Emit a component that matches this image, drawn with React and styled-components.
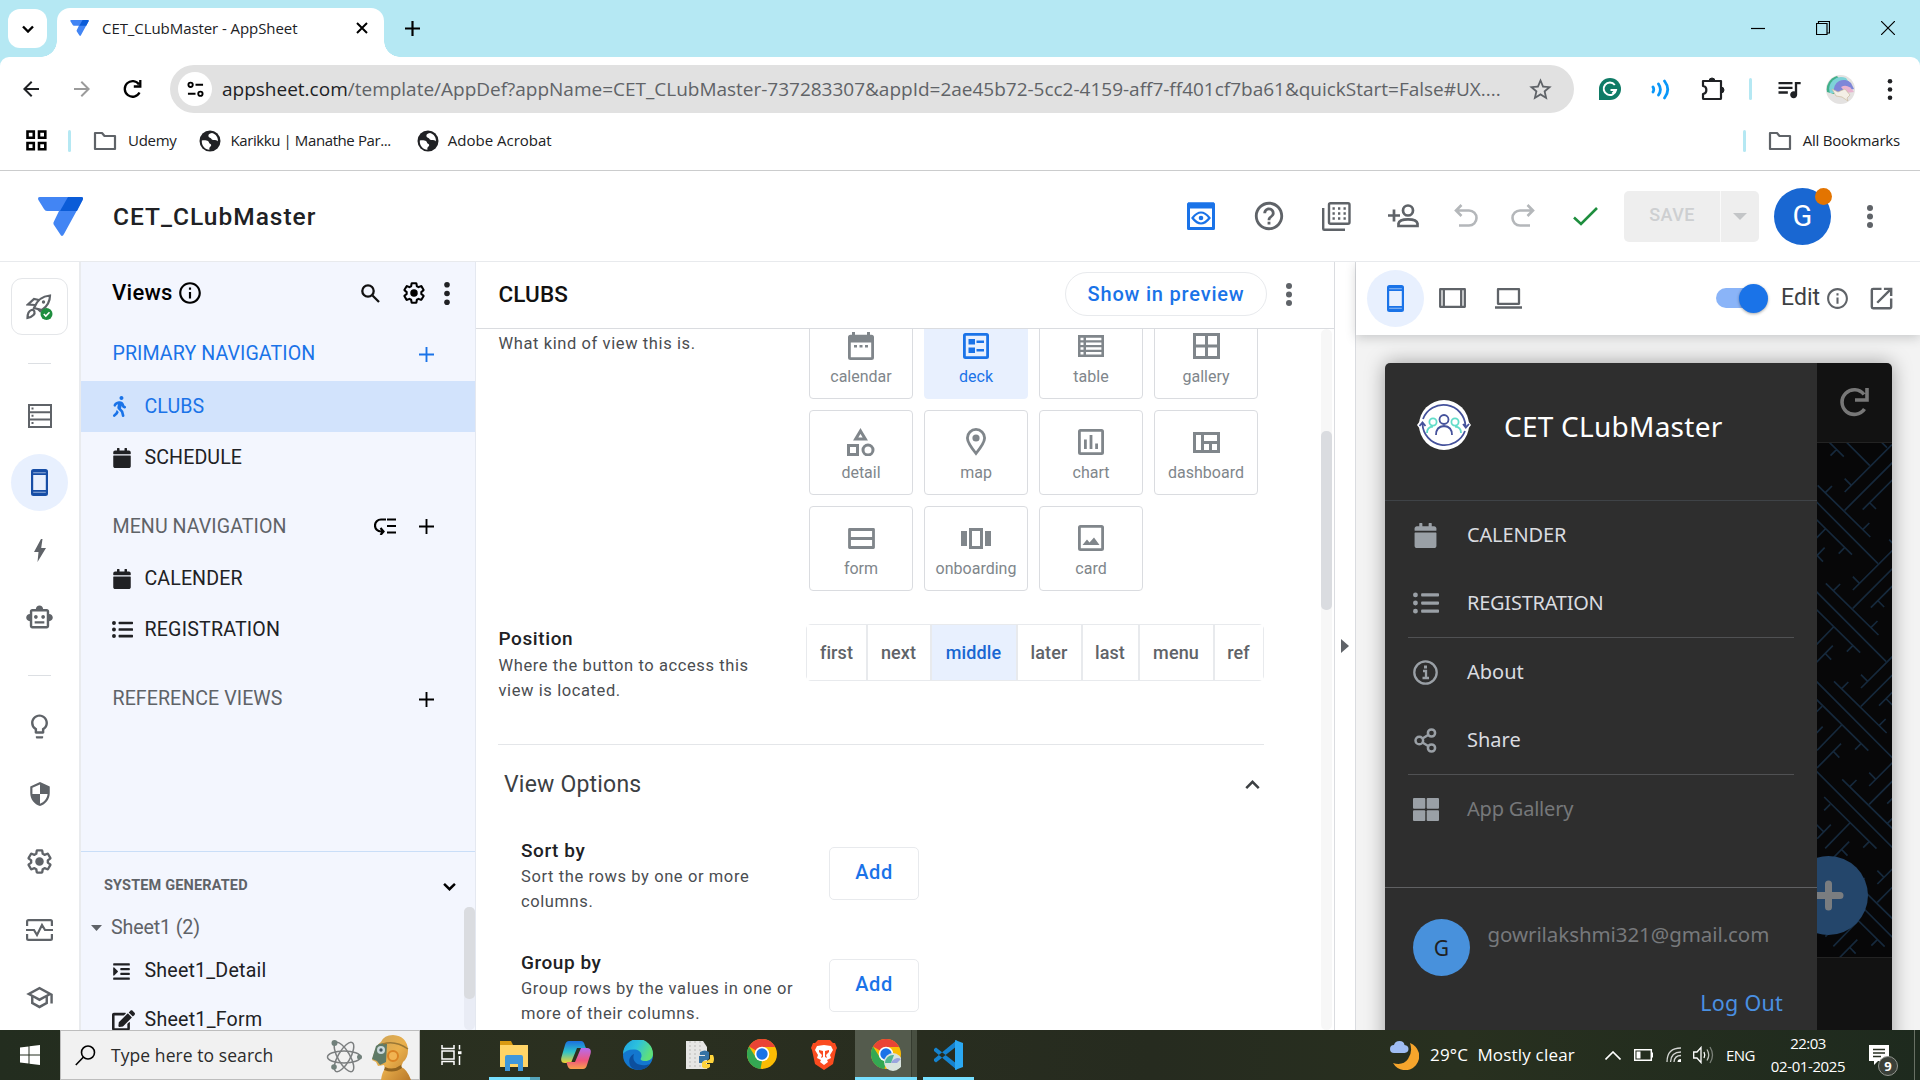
import React from "react";
import styled, { createGlobalStyle, css } from "styled-components";
import {
  MdHelpOutline, MdInfoOutline,
  MdOutlineSmartToy, MdOutlineLightbulb, MdOutlineSchool, MdSecurity,
  MdOpenInNew, MdQueueMusic, MdStarOutline, MdArrowBack, MdArrowForward,
} from "react-icons/md";
import { FaWalking, FaCalendar, FaListUl, FaIndent, FaEdit } from "react-icons/fa";

const SEGOE = '"Open Sans", "Noto Sans", sans-serif';
const ROBOTO = 'Roboto, "Liberation Sans", sans-serif';
const GSANS = 'Roboto, "Open Sans", sans-serif';
const NOTO = '"Noto Sans", "Open Sans", sans-serif';

const Global = createGlobalStyle`
  *, *::before, *::after { box-sizing: border-box; }
  html, body { margin: 0; padding: 0; overflow: hidden; }
  body { width: 1920px; height: 1080px; background: #fff; }
  svg { display: block; flex: none; }
`;

const T = styled.span`
  white-space: pre;
  flex: none;
  font-family: ${(p) => p.$f || ROBOTO};
  font-size: ${(p) => p.$s}px;
  font-weight: ${(p) => p.$b || 400};
  letter-spacing: ${(p) => p.$ls || 0}px;
  line-height: ${(p) => p.$lh || 24}px;
  color: ${(p) => p.$c || "#202124"};
`;

const Screen = styled.div`
  width: 1920px;
  height: 1080px;
  display: flex;
  flex-direction: column;
  overflow: hidden;
`;

/* ---------- browser chrome ---------- */
const TabStrip = styled.div`
  height: 57px;
  background: #b5e8f3;
  display: flex;
  align-items: flex-end;
  padding-left: 8px;
`;
const TabSearch = styled.div`
  width: 39px;
  height: 39px;
  margin: 0 10px 9px 0;
  border-radius: 12px;
  background: #fff;
  display: grid;
  place-items: center;
`;
const Tab = styled.div`
  position: relative;
  width: 327px;
  height: 49px;
  background: #fff;
  border-radius: 13px 13px 0 0;
  display: flex;
  align-items: center;
  padding: 0 16px 9px 13px;
  gap: 13px;
  &::before, &::after {
    content: "";
    position: absolute;
    bottom: 0;
    width: 16px;
    height: 16px;
  }
  &::before { left: -16px; background: radial-gradient(circle at 0 0, transparent 15.5px, #fff 16px); }
  &::after { right: -16px; background: radial-gradient(circle at 100% 0, transparent 15.5px, #fff 16px); }
`;
const Grow = styled.div`flex: 1;`;
const NewTab = styled.div`padding: 0 0 21px 21px;`;
const WindowButtons = styled.div`
  display: flex;
  gap: 51px;
  padding: 0 25px 22px 0;
`;
const ToolbarBack = styled.div`background: #b5e8f3;`;
const Toolbar = styled.div`
  height: 64px;
  background: #fff;
  border-radius: 9px 9px 0 0;
  display: flex;
  align-items: center;
  padding-left: 19px;
`;
const NavIcons = styled.div`
  display: flex;
  width: 151px;
  gap: 27px;
`;
const Omnibox = styled.div`
  width: 1404px;
  height: 48px;
  border-radius: 24px;
  background: #e1e1e1;
  display: flex;
  align-items: center;
  padding: 0 20px 0 8px;
`;
const SiteInfo = styled.div`
  width: 34px;
  height: 34px;
  border-radius: 50%;
  background: #fff;
  margin-right: 10px;
  display: grid;
  place-items: center;
`;
const Extensions = styled.div`
  display: flex;
  align-items: center;
  margin-left: 10px;
`;
const Bar = styled.i`
  width: 3px;
  height: 22px;
  border-radius: 2px;
  background: #b5e8f3;
  margin: ${(p) => p.$m || 0};
`;
const Profile = styled.div`
  width: 29px;
  height: 29px;
  border-radius: 50%;
  overflow: hidden;
`;
const Bookmarks = styled.div`
  height: 50px;
  border-bottom: 1px solid #cbcccd;
  display: flex;
  align-items: center;
  padding: 0 20px 10px 26px;
`;
const Bookmark = styled.div`
  display: flex;
  align-items: center;
  color: #5f6368;
  gap: ${(p) => p.$g || 10}px;
  margin-right: ${(p) => p.$m || 0}px;
  ${T} { padding-bottom: 2px; line-height: 22px; }
`;

/* ---------- app header ---------- */
const AppHeader = styled.header`
  height: 91px;
  background: #fff;
  border-bottom: 1px solid #e8eaed;
  display: flex;
  align-items: center;
  padding-left: 38px;
`;
const HeaderTitle = styled.div`
  padding: 1px 0 0 30px;
  display: flex;
`;
const HeaderTools = styled.div`
  display: flex;
  align-items: center;
  color: #5f6368;
`;
const Tool = styled.div`
  width: ${(p) => p.$w}px;
  display: flex;
  justify-content: center;
  color: ${(p) => p.$c || "inherit"};
`;
const SaveGroup = styled.div`
  width: 135px;
  height: 51px;
  border-radius: 5px;
  background: #eee;
  display: flex;
  color: #c8cacc;
  overflow: hidden;
`;
const SaveMain = styled.div`
  width: 97px;
  border-right: 1px solid #fafafa;
  display: grid;
  place-items: center;
  padding-bottom: 3px;
`;
const SaveMore = styled.div`
  flex: 1;
  display: grid;
  place-items: center;
`;
const Avatar = styled.div`
  position: relative;
  width: 57px;
  height: 57px;
  border-radius: 50%;
  background: ${(p) => p.$bg};
  display: grid;
  place-items: center;
  margin: ${(p) => p.$m || 0};
`;
const AvatarBadge = styled.i`
  position: absolute;
  width: 17px;
  height: 17px;
  border-radius: 50%;
  background: #e37400;
  right: -1px;
  top: 0;
`;

/* ---------- editor ---------- */
const Workspace = styled.main`
  height: 768px;
  display: flex;
  overflow: hidden;
`;
const Rail = styled.nav`
  width: 81px;
  border-right: 2px solid #e9ebee;
  display: flex;
  flex-direction: column;
  align-items: center;
  padding-top: 16px;
  color: #5f6368;
`;
const RocketBox = styled.div`
  flex: none;
  width: 57px;
  height: 57px;
  border: 1px solid #e4e6e9;
  border-radius: 11px;
  display: grid;
  place-items: center;
`;
const RailRule = styled.i`
  flex: none;
  width: 23px;
  height: 1px;
  background: #dcdfe3;
  margin: ${(p) => p.$m};
`;
const RailItem = styled.div`
  flex: none;
  width: 57px;
  height: 57px;
  margin-bottom: ${(p) => (p.$mb === undefined ? 11 : p.$mb)}px;
  border-radius: 50%;
  background: ${(p) => (p.$on ? "#e8f0fe" : "none")};
  color: ${(p) => (p.$on ? "#174ea6" : "inherit")};
  display: grid;
  place-items: center;
`;
const Sidebar = styled.aside`
  width: 395px;
  background: #f3f6fe;
  border-right: 1px solid #e4e8f0;
  display: flex;
  flex-direction: column;
`;
const SideHead = styled.div`
  height: 65px;
  display: flex;
  align-items: center;
  padding: 0 24px 3px 31px;
`;
const SearchSlot = styled.span`margin-right: 5px;`;
const SideSection = styled.div`
  height: ${(p) => p.$h || 54}px;
  display: flex;
  align-items: center;
  padding: ${(p) => p.$pt || 0}px 39px 0 31.5px;
  gap: 20px;
`;
const SideRow = styled.div`
  height: ${(p) => p.$h || 51}px;
  flex: none;
  display: flex;
  align-items: center;
  padding-left: 31px;
  color: ${(p) => (p.$on ? "#1a73e8" : "#202124")};
  background: ${(p) => (p.$on ? "#d2e3fc" : "none")};
`;
const RowIcon = styled.span`
  width: 32.5px;
  display: flex;
`;
const WalkIcon = styled(RowIcon)`
  padding-right: 4px;
  justify-content: flex-start;
  svg { margin-left: -3px; }
`;
const InfoSlot = styled.span`padding-left: 4px;`;
const SystemArea = styled.div`
  flex: none;
  height: 179px;
  margin-top: auto;
  border-top: 1px solid #c9def8;
  display: flex;
  flex-direction: column;
  overflow: hidden;
`;
const SystemHead = styled.div`
  height: 55px;
  flex: none;
  display: flex;
  align-items: center;
  justify-content: space-between;
  padding: 13px 19px 0 23px;
`;
const SystemBody = styled.div`
  display: flex;
  height: 123px;
`;
const SystemList = styled.div`flex: 1; overflow: hidden;`;
const SheetName = styled.div`
  height: 42px;
  display: flex;
  align-items: center;
  padding-left: 10px;
  gap: 9px;
  color: #5f6368;
`;
const ScrollTrack = styled.div`
  width: 11px;
  background: ${(p) => p.$bg};
  border-radius: 6px;
  padding-top: ${(p) => p.$t || 0}px;
`;
const Thumb = styled.div`
  height: ${(p) => p.$h}px;
  border-radius: 5px;
  background: #dadce0;
`;

const Center = styled.section`
  width: 859px;
  border-right: 1px solid #dadce0;
  display: flex;
  flex-direction: column;
`;
const CenterHead = styled.div`
  height: 67px;
  flex: none;
  border-bottom: 1px solid #dadce0;
  display: flex;
  align-items: center;
  padding: 0 33px 2px 22.5px;
`;
const PillButton = styled.div`
  width: 202px;
  height: 44px;
  border: 1px solid #e8eaed;
  border-radius: 22px;
  display: grid;
  place-items: center;
  margin-right: 10px;
`;
const CenterBody = styled.div`
  flex: 1;
  display: flex;
  min-height: 0;
`;
const Form = styled.div`
  width: 788px;
  padding-left: 22px;
  margin-right: 57px;
  overflow: hidden;
`;
const Field = styled.div`
  display: flex;
  height: ${(p) => p.$h}px;
  padding-left: ${(p) => p.$pl || 0.5}px;
`;
const FieldText = styled.div`
  width: ${(p) => p.$w}px;
  flex: none;
  display: flex;
  flex-direction: column;
  padding-top: ${(p) => p.$pt}px;
`;
const Tiles = styled.div`
  display: grid;
  grid-template-columns: repeat(4, 104px);
  grid-auto-rows: 85px;
  gap: 11px;
  margin-top: -15px;
`;
const Tile = styled.div`
  border: 1px solid ${(p) => (p.$on ? "#e8f0fe" : "#dadce0")};
  background: ${(p) => (p.$on ? "#e8f0fe" : "#fff")};
  color: ${(p) => (p.$on ? "#1a73e8" : "#80868b")};
  border-radius: 4px;
  display: flex;
  flex-direction: column;
  align-items: center;
  padding-top: 14px;
`;
const IconSlot = styled.div`
  height: 34px;
  display: grid;
  place-items: center;
  margin-bottom: 2px;
`;
const Segments = styled.div`
  display: flex;
  height: 57px;
  width: 458px;
  margin-top: 3px;
  border: 1px solid #e8eaed;
  border-radius: 5px;
`;
const Segment = styled.div`
  width: ${(p) => p.$w}px;
  flex: none;
  background: ${(p) => (p.$on ? "#e8f0fe" : "#fff")};
  display: grid;
  place-items: center;
  & + & { border-left: 2px solid #e8eaed; padding-right: 1px; }
`;
const SectionHead = styled.div`
  height: 79px;
  border-top: 1px solid #e4e6e9;
  color: #3c4043;
  display: flex;
  align-items: center;
  justify-content: space-between;
  padding: 1px 4px 0 6px;
`;
const AddButton = styled.div`
  width: 90px;
  height: 53px;
  border: 1px solid #e8eaed;
  border-radius: 5px;
  display: grid;
  place-items: center;
  padding-bottom: 3px;
  margin-top: 24px;
`;
const Handle = styled.div`
  width: 21px;
  border-right: 1px solid #dadce0;
  display: grid;
  place-items: center;
`;

/* ---------- preview ---------- */
const Preview = styled.section`
  flex: 1;
  background: #f3f3f3;
  display: flex;
  flex-direction: column;
`;
const PreviewBar = styled.div`
  height: 73px;
  flex: none;
  background: #fff;
  box-shadow: 0 3px 10px rgba(60, 64, 67, 0.22);
  display: flex;
  align-items: center;
  padding: 0 0 1px 11px;
`;
const Device = styled.div`
  width: ${(p) => p.$w || 57}px;
  height: 57px;
  border-radius: 50%;
  display: grid;
  place-items: center;
  color: ${(p) => (p.$on ? "#1a73e8" : "#5f6368")};
  background: ${(p) => (p.$on ? "#e8f0fe" : "none")};
`;
const EditGroup = styled.div`
  display: flex;
  align-items: center;
  color: #5f6368;
  gap: 5px;
  padding-right: 17px;
`;
const OpenSlot = styled.div`
  color: #5f6368;
  margin-right: 24px;
`;
const Toggle = styled.div`
  width: 44px;
  height: 20px;
  border-radius: 10px;
  background: #8ab4f8;
  display: flex;
  align-items: center;
  margin-right: 21px;
`;
const Knob = styled.i`
  flex: none;
  width: 29px;
  height: 29px;
  margin-left: 23px;
  border-radius: 50%;
  background: #1a73e8;
  box-shadow: 0 1px 3px rgba(0, 0, 0, 0.35);
`;
const Phone = styled.div`
  width: 507px;
  height: 720px;
  margin: 28px 0 0 29px;
  border-radius: 5px;
  display: flex;
  overflow: hidden;
`;
const PhoneShadow = styled.div`
  flex: 1;
  overflow: hidden;
  ${Phone} { box-shadow: 0 0 20px rgba(0, 0, 0, 0.36); }
`;
const Drawer = styled.div`
  width: 432px;
  background: #2e2e2e;
  display: flex;
  flex-direction: column;
`;
const DrawerHead = styled.div`
  height: 138px;
  border-bottom: 1px solid #3f4347;
  display: flex;
  align-items: flex-start;
  gap: 33px;
  padding: 37px 0 0 32px;
`;
const DrawerRow = styled.div`
  height: 68px;
  display: flex;
  align-items: center;
  padding-left: 28px;
  color: #9aa0a6;
`;
const DrawerIcon = styled.span`
  width: 54px;
  display: flex;
`;
const DrawerRule = styled.i`
  height: 1px;
  flex: none;
  background: #505153;
  margin: 0 23px;
`;
const DrawerFoot = styled.div`
  margin-top: 44px;
  border-top: 1px solid #606163;
  height: 160px;
  display: flex;
  padding: 31px 34px 0 28px;
`;
const Account = styled.div`
  flex: 1;
  display: flex;
  flex-direction: column;
  justify-content: space-between;
  padding-left: 17.5px;
  height: 99px;
`;
const LogOut = styled.div`
  display: flex;
  justify-content: flex-end;
`;
const AppBehind = styled.div`
  flex: 1;
  background: #121212;
`;
const BehindHead = styled.div`
  height: 80px;
  border-bottom: 1px solid #232323;
  display: flex;
  align-items: center;
  padding: 0 0 2px 22px;
`;
const Maze = styled.div`
  position: relative;
  height: 515px;
  background: #070708;
  border-bottom: 1px solid #232323;
  overflow: hidden;
`;
const Fab = styled.div`
  position: absolute;
  left: -28px;
  bottom: 22px;
  width: 79px;
  height: 79px;
  border-radius: 50%;
  background: #24466b;
  display: grid;
  place-items: center;
`;

/* ---------- taskbar ---------- */
const Taskbar = styled.footer`
  height: 50px;
  background: linear-gradient(90deg, #232d1f 0, #2b3020 30%, #262b1f 60%, #28301f 76%, #1e2a1e 100%);
  display: flex;
  align-items: center;
`;
const Start = styled.div`
  width: 60px;
  display: grid;
  place-items: center;
`;
const SearchBox = styled.div`
  width: 360px;
  height: 50px;
  background: #f1f1f1;
  border: 1px solid #bdbdbd;
  display: flex;
  align-items: center;
  gap: 15px;
  padding-left: 14px;
`;
const SearchArt = styled.div`
  display: flex;
  align-items: center;
  gap: 9px;
  padding: 3px 6px 0 0;
`;
const TaskCell = styled.div`
  width: ${(p) => p.$w || 62}px;
  height: 50px;
  display: flex;
  flex-direction: column;
  align-items: center;
  color: #fff;
  ${(p) => p.$on && css`background: linear-gradient(90deg, #545b4d 0 56px, #353b2f 56px 57px, #484f41 57px);`}
`;
const TaskIcon = styled.div`
  height: 47px;
  display: grid;
  place-items: center;
  padding-top: 3px;
`;
const Underline = styled.i`
  width: ${(p) => p.$w || 51}px;
  height: 3px;
  background: ${(p) => (p.$split ? "linear-gradient(90deg,#76dfff 0 41px,#55a4ba 41px)" : "#76dfff")};
`;
const Tray = styled.div`display: flex; align-items: center; color: #fff;`;
const Weather = styled.div`
  display: flex;
  align-items: center;
  gap: 11px;
  margin-right: 30px;
`;
const Slot = styled.div`width: ${(p) => p.$w}px; display: flex;`;
const Clock = styled.div`
  width: 76px;
  display: flex;
  flex-direction: column;
  align-items: center;
  margin: 0 1px 0 15px;
`;
const Notice = styled.div`
  position: relative;
  width: 26px;
  margin-left: 22px;
`;
const NoticeBadge = styled.div`
  position: absolute;
  left: 9px;
  top: 11px;
  width: 20px;
  height: 20px;
  border-radius: 50%;
  background: #3b4039;
  border: 1px solid #92968f;
  display: grid;
  place-items: center;
`;
const PeekLine = styled.i`
  width: 1px;
  height: 50px;
  background: #687064;
  margin: 0 5px 0 19px;
`;

/* ---------- drawings ---------- */
const Line = ({ w = 24, h, vb = "0 0 24 24", sw = 2, children, cap = "butt", join = "miter" }) => (
  <svg width={w} height={h || w} viewBox={vb} fill="none" stroke="currentColor" strokeWidth={sw} strokeLinecap={cap} strokeLinejoin={join}>{children}</svg>
);
const AppLogo = ({ w, h }) => (
  <svg width={w} height={h} viewBox="0 0 45 39">
    <path d="M2 0h41q3 0 1.600 3L26 37q-2 4-4 0l-6-9q-1-1.500-.3-3l5.300-11H9q-2 0-3-2L.4 3Q-.8 0 2 0z" fill="#4285f4" />
    <path d="M30 0h13q3 0 1.600 3L39 14H22z" fill="#0b5cd8" />
  </svg>
);
const GEAR = "M19.43 12.98c.04-.32.07-.64.07-.98 0-.34-.03-.66-.07-.98l2.11-1.65c.19-.15.24-.42.12-.64l-2-3.46a.5.5 0 00-.61-.22l-2.49 1c-.52-.4-1.08-.73-1.69-.98l-.38-2.65A.488.488 0 0014 2h-4c-.25 0-.46.18-.49.42l-.38 2.65c-.61.25-1.17.59-1.69.98l-2.49-1a.566.566 0 00-.18-.03c-.17 0-.34.09-.43.25l-2 3.460c-.13.22-.07.49.12.64l2.11 1.65c-.04.32-.07.65-.07.98 0 .33.03.66.07.98l-2.11 1.65c-.19.15-.24.42-.12.64l2 3.460a.5.5 0 00.61.22l2.49-1c.52.4 1.080.73 1.690.98l.38 2.650c.03.24.24.42.49.42h4c.25 0 .46-.18.49-.42l.38-2.650c.61-.25 1.170-.59 1.690-.98l2.490 1c.06.02.12.03.18.03.17 0 .34-.09.43-.25l2-3.460c.12-.22.07-.49-.12-.64l-2.110-1.650z";
const Gear = ({ s }) => (
  <svg width={s} height={s} viewBox="0.8 0.8 22.400 22.400">
    <path d={GEAR} fill="none" stroke="currentColor" strokeWidth="2.100" strokeLinejoin="round" />
    <circle cx="12" cy="12" r="3.800" fill="currentColor" />
  </svg>
);
const Plus = ({ s = 15, sw = 2 }) => <Line w={s} vb="0 0 16 16" sw={sw}><path d="M8 0v16M0 8h16" /></Line>;
const Folder = () => <Line w={24} h={20} vb="0 0 24 20" sw={2.200} join="round"><path d="M2 2h7l2.500 3H22v13H2z" /></Line>;
const Globe = () => (
  <svg width="22" height="22" viewBox="0 0 22 22">
    <circle cx="11" cy="11" r="10.500" fill="#202124" />
    <path d="M13 3c-3 .5-4 1.500-3.500 3.500.3 1.500 2.500 1 3 2.500.4 1.200 2 1 3.500 1 1.500.2 2.500.5 3 1.500.2-4-2-7.500-6-8.500zM2.800 10.500c2-.5 5-.3 6.200.5 1.200.9.8 2.200 2 2.800 1.500.6 1.500 1.700.5 2.700-.8.8-1.500 1.500-1 3.200-4.500 0-8-4-7.700-9.200z" fill="#fff" />
  </svg>
);
const Dots = ({ h = 23, r = 2.700, c = "#202124" }) => (
  <svg width="8" height={h} viewBox={`0 0 8 ${h}`} fill={c}>
    <circle cx="4" cy={r} r={r} /><circle cx="4" cy={h / 2} r={r} /><circle cx="4" cy={h - r} r={r} />
  </svg>
);
const PhoneIcon = ({ w, h }) => (
  <svg width={w} height={h} viewBox="0 0 17 27" fill="currentColor" fillRule="evenodd">
    <path d="M2.500 0h12A2.500 2.500 0 0 1 17 2.500v22a2.500 2.500 0 0 1-2.500 2.500h-12A2.500 2.500 0 0 1 0 24.500v-22A2.500 2.500 0 0 1 2.500 0zM2.200 6v15h12.600V6z" />
    <path d="M2.200 3.200h12.600v1H2.200zM2.200 22.800h12.600v1H2.200z" fill="#e8f0fe" opacity=".6" />
  </svg>
);
const Chevron = ({ w, h, d, sw = 2.500 }) => <Line w={w} h={h} vb="0 0 12 8" sw={sw}><path d={d || "M1 1.500l5 5 5-5"} /></Line>;

const FRAME = "M2.500 0h21A2.500 2.500 0 0 1 26 2.500v21a2.500 2.500 0 0 1-2.500 2.500h-21A2.500 2.500 0 0 1 0 23.500v-21A2.500 2.500 0 0 1 2.500 0zm.3 2.800v20.400h20.400V2.800z";
const Framed = ({ children }) => (
  <svg width="26" height="26" viewBox="0 0 26 26" fill="currentColor" fillRule="evenodd"><path d={FRAME} />{children}</svg>
);
const tileIcons = {
  calendar: (
    <svg width="26" height="28" viewBox="0 0 26 28" fill="currentColor" fillRule="evenodd">
      <path d="M4 0h3v2.800h12V0h3v2.800h1.500A2.500 2.500 0 0 1 26 5.300v20.200a2.500 2.500 0 0 1-2.500 2.500h-21A2.500 2.500 0 0 1 0 25.500V5.300a2.500 2.500 0 0 1 2.500-2.500H4zM2.800 10.500v14.700h20.400V10.500z" />
      <path d="M6 13h3v2.600H6zM11.500 13h3v2.600h-3zM17 13h3v2.600h-3z" />
    </svg>
  ),
  deck: <Framed><path d="M5.500 6H12v5.500H5.500zM5.500 14.500H12V20H5.500zM13.500 7.500H21V10h-7.500zM13.500 16H21v2.500h-7.500z" /></Framed>,
  table: (
    <svg width="26" height="22" viewBox="0 0 26 22" fill="currentColor" fillRule="evenodd"><path d="M0 0h26v22H0zM2.500 2.800v2.500h3V2.800zm5.500 0v2.500h15.400V2.800zM2.500 7.500V10h3V7.500zm5.500 0V10h15.400V7.500zM2.500 12.200v2.500h3v-2.500zm5.500 0v2.500h15.400v-2.500zM2.500 16.900v2.500h3v-2.500zm5.500 0v2.500h15.400v-2.500z" /></svg>
  ),
  gallery: <Line w={27} h={26} vb="0 0 27 26" sw={3}><path d="M1.500 1.500h24v23h-24zM13.500 1v24M1 13h25" /></Line>,
  detail: <Line w={28} h={28} vb="0 0 28 28" sw={3}><path d="M13.500 3L18.300 11H8.700zM1.500 17.500h9v9h-9z" /><circle cx="21" cy="22" r="5" /></Line>,
  map: <svg width="20" height="28" viewBox="0 0 20 28" fill="none" stroke="currentColor" strokeWidth="2.800"><path d="M10 25.500C4 18 1.400 14 1.400 10a8.600 8.600 0 0 1 17.200 0c0 4-2.600 8-8.600 15.500z" /><circle cx="10" cy="10" r="3.600" fill="currentColor" stroke="none" /></svg>,
  chart: <Framed><path d="M6 10.500h2.800V20H6zM11.600 6h2.800v14h-2.800zM17.200 14.500H20V20h-2.800z" /></Framed>,
  dashboard: <Line w={27} h={21} vb="0 0 27 21" sw={3}><path d="M1.500 1.500h24v18h-24zM9.500 1v19M9 10.500h16M17.500 10v10" /></Line>,
  form: <Line w={27} h={21} vb="0 0 27 21" sw={2.800} join="round"><path d="M1.500 1.500h24v18h-24zM1 10.500h25" /></Line>,
  onboarding: (
    <svg width="30" height="21" viewBox="0 0 30 21" fill="currentColor"><path d="M0 3h6v15H0zM24 3h6v15h-6z" /><path fillRule="evenodd" d="M8 0h14v21H8zm3 3v15h8V3z" /></svg>
  ),
  card: <Framed><path d="M4.500 20l4.500-5.500 2.500 3L16 12.500l5.500 7.500z" /></Framed>,
};

const ChromeLogo = ({ person }) => (
  <svg width="30" height="32" viewBox="0 0 30 32">
    <circle cx="15" cy="15" r="15" fill="#fbbc04" />
    <path d="M15 15L2 7.500a15 15 0 0 1 26 0L28 8H15z" fill="#ea4335" />
    <path d="M2 7.500L8.900 18.500 15 22l-1.500 8A15 15 0 0 1 2 7.500z" fill="#34a853" />
    <circle cx="15" cy="15" r="7.300" fill="#fff" /><circle cx="15" cy="15" r="5.700" fill="#1a73e8" />
    {person && <g><circle cx="22" cy="23" r="9" fill="#d8e3de" /><path d="M14 24a8 8 0 0 1 9-8l-3 8z" fill="#4fb592" /><path d="M20 24a7 7 0 0 1 10-4l-4 4z" fill="#9aa4de" /></g>}
  </svg>
);

const mazeMotif = "M98 155L240 13M98 115l20 20M98 210L300 8M152 208L300 60M174 188l18 18M17 135L175 290M40 157l20-20M152 268l20-20M-60 111L198 370M-37 188L120 343M98 322l-18 18M-37 228l18-18M-34 342L40 266M-34 395L38 322M14 344l19 20M-58 313L-17 271M-62 269l24 24M207 4l18 18";
const MazeArt = () => (
  <svg width="75" height="515" viewBox="15 8 225 1545" fill="none" stroke="#16293c" strokeWidth="5">
    {[-1, 0, 1, 2, 3, 4, 5].map((k) => <path key={k} transform={`translate(${24.500 * k} ${294 * k})`} d={mazeMotif} />)}
  </svg>
);

const railIcons = {
  data: <svg width="24" height="24" viewBox="0 0 24 24" fill="currentColor" fillRule="evenodd"><path d="M0 0h24v24H0zm2 2v5.200h20V2zm0 7.200v5.300h20V9.200zm0 7.300V22h20v-5.500zM3.500 3.500h2v2h-2zm0 7.200h2v2h-2zm0 7.300h2v2h-2z" /></svg>,
  pulse: <Line w={27} h={22} vb="0 0 27 22" sw={2.200}><path d="M1.100 7V2.500q0-1.400 1.400-1.400h22q1.400 0 1.400 1.400V7M1.100 15v4.500q0 1.400 1.400 1.400h22q1.400 0 1.400-1.400V15M0 11h8l3 5 5-10 3 5h8" /></Line>,
};

const Browser = () => (
  <>
    <TabStrip>
      <TabSearch><Chevron w={12} h={8} sw={2.400} /></TabSearch>
      <Tab>
        <AppLogo w={19} h={16} />
        <T $f={SEGOE} $s={15} $ls={-0.070}>CET_CLubMaster - AppSheet</T>
        <Grow />
        <Line w={12} vb="0 0 12 12" sw={2}><path d="M1 1l10 10M11 1L1 11" /></Line>
      </Tab>
      <NewTab><Plus s={15} sw={2.300} /></NewTab>
      <Grow />
      <WindowButtons>
        <Line w={14} vb="0 0 14 14" sw={1.200}><path d="M0 7.500h14" /></Line>
        <Line w={14} vb="0 0 14 14" sw={1.200}><path d="M.5 2.500h10.500v11H.5zM2.500 2V.5h11V12H11" /></Line>
        <Line w={14} vb="0 0 14 14" sw={1.200}><path d="M0 0l14 14M14 0L0 14" /></Line>
      </WindowButtons>
    </TabStrip>
    <ToolbarBack>
      <Toolbar>
        <NavIcons>
          <MdArrowBack size={24} color="#1f2124" />
          <MdArrowForward size={24} color="#9b9b9b" />
          <Line w={24} vb="0 0 24 24" sw={2.300}><path d="M18.500 15.500A7.800 7.800 0 1 1 18 7.500M19.300 3v6.500h-6.500" /></Line>
        </NavIcons>
        <Omnibox>
          <SiteInfo><Line w={17} vb="0 0 18 18" sw={2}><circle cx="3.800" cy="4" r="2.300" /><path d="M9 4h8M1 13.500h8" /><circle cx="14.200" cy="13.500" r="2.300" /></Line></SiteInfo>
          <T $f={SEGOE} $s={19} $ls={-0.010} $c="#606367"><T $f={SEGOE} $s={19}>appsheet.com</T>/template/AppDef?appName=CET_CLubMaster-737283307&amp;appId=2ae45b72-5cc2-4159-aff7-ff401cf7ba61&amp;quickStart=False#UX....</T>
          <Grow />
          <MdStarOutline size={27} color="#5f6368" />
        </Omnibox>
        <Extensions>
          <Tool $w={52}><svg width="22" height="22" viewBox="0 0 22 22"><path d="M11 0a11 11 0 1 1 0 22H0V11A11 11 0 0 1 11 0z" fill="#0f7b66" /><path d="M15.800 7A6.200 6.200 0 1 0 17 12h-5.500M13.500 15.500l3.300-3.500" fill="none" stroke="#fff" strokeWidth="2" /></svg></Tool>
          <Tool $w={50}><svg width="20" height="21" viewBox="0 0 20 21" fill="none" stroke="#0a97f8" strokeWidth="2.800" strokeLinecap="round"><path d="M2 8q1.500 2.500 0 5M7.500 5q3.800 5.500 0 11M13.500 2q6.500 8.500 0 17" /></svg></Tool>
          <Tool $w={53}><svg width="24" height="24" viewBox="0 0 24 24"><path d="M2 4h18v17.200Q20 22 19.200 22H2.800Q2 22 2 21.200V17c4.500-.5 4.500-7.500 0-8z" fill="none" stroke="#1f2124" strokeWidth="2.200" strokeLinejoin="round" /><path d="M8 4a3 3 0 0 1 6 0zM20 10a3 3 0 0 1 0 6z" fill="#1f2124" stroke="#1f2124" /></svg></Tool>
          <Tool $w={23}><Bar /></Tool>
          <Tool $w={54}><MdQueueMusic size={28} color="#1f2124" /></Tool>
          <Tool $w={48}>
            <Profile>
              <svg width="29" height="29" viewBox="0 0 29 29"><rect width="29" height="29" fill="#e4e2e1" /><path d="M1 17A14 14 0 0 1 11 1l5 6-8 12z" fill="#41b08a" /><path d="M4 18A12 12 0 0 1 20 3l4 6-12 9z" fill="#7ed3d8" /><path d="M8 17a10 10 0 0 1 17-9l3 6-14 3z" fill="#7d86d8" /><path d="M15 12q7-4 13 5l-8 1z" fill="#e9b3cf" /><path d="M6 14l6 3 7-3 5 6-3 3 1 3-6-4-6-1z" fill="#f4efe6" stroke="#cbbba0" strokeWidth=".7" /></svg>
            </Profile>
          </Tool>
          <Tool $w={52}><Dots r={2.300} h={21} /></Tool>
        </Extensions>
      </Toolbar>
    </ToolbarBack>
    <Bookmarks>
      <Line w={21} vb="0 0 21 21" sw={2.600}><path d="M1.500 1.500h6.300v6.300H1.500zM13 1.500h6.300v6.300H13zM1.500 13h6.300v6.300H1.500zM13 13h6.300v6.300H13z" /></Line>
      <Bar $m="0 22px 0 21px" />
      <Bookmark $g={11} $m={23}><Folder /><T $f={SEGOE} $s={15} $ls={-0.3}>Udemy</T></Bookmark>
      <Bookmark $g={9} $m={26}><Globe /><T $f={SEGOE} $s={15} $ls={-0.4}>Karikku | Manathe Par...</T></Bookmark>
      <Bookmark $g={9}><Globe /><T $f={SEGOE} $s={15}>Adobe Acrobat</T></Bookmark>
      <Grow />
      <Bar $m="0 22px 0 0" />
      <Bookmark $g={11}><Folder /><T $f={SEGOE} $s={15} $ls={-0.2}>All Bookmarks</T></Bookmark>
    </Bookmarks>
  </>
);

const Header = () => (
  <AppHeader>
    <AppLogo w={45} h={39} />
    <HeaderTitle><T $f={GSANS} $s={24.500} $b={500} $ls={1}>CET_CLubMaster</T></HeaderTitle>
    <Grow />
    <HeaderTools>
      <Tool $w={68} $c="#1a73e8">
        <svg width="28" height="28" viewBox="0 0 28 28" fill="none" stroke="currentColor"><path d="M1.500 2h25v24.500h-25z" strokeWidth="3" strokeLinejoin="round" /><path d="M1 3.500h26" strokeWidth="6" /><path d="M5.500 16q8.500-11 17 0-8.500 11-17 0z" strokeWidth="2.200" /><circle cx="14" cy="16" r="2.300" fill="currentColor" stroke="none" /></svg>
      </Tool>
      <Tool $w={68}><MdHelpOutline size={34} /></Tool>
      <Tool $w={66}>
        <Line w={29} vb="0 0 29 29" sw={2.400}><path d="M1.200 6v20.800q0 1 1 1H23" /><rect x="7" y="1.200" width="20.500" height="20.500" rx="1.500" /><path d="M10.500 6.500h14M10.500 11.500h14M10.500 16.500h14" strokeDasharray="2.300 3.200" /></Line>
      </Tool>
      <Tool $w={68}><Line w={31} h={24} vb="0 0 31 24" sw={2.700}><path d="M0 11.500h12M6 5.500v12" /><circle cx="20" cy="6.500" r="5" /><path d="M10.500 22v-2.500c1-5.500 18-5.500 19 0V22z" /></Line></Tool>
      <Tool $w={57} $c="#b4b7ba"><Line w={24} h={24} sw={2.600}><path d="M7.500 1L2 6.500l5.500 5.500M2 6.500h13a7 7 0 0 1 0 15H5" /></Line></Tool>
      <Tool $w={57} $c="#b4b7ba"><Line w={24} h={24} sw={2.600}><path d="M16.500 1L22 6.500 16.500 12M22 6.500H9a7 7 0 0 0 0 15h10" /></Line></Tool>
      <Tool $w={68} $c="#1e8e3e"><Line w={25} h={19} vb="0 0 25 19" sw={2.600}><path d="M1 10.500l7 6.500L24 1" /></Line></Tool>
      <Tool $w={5} />
      <SaveGroup>
        <SaveMain><T $f={ROBOTO} $s={18} $ls={0.4} $c="#cdcfd1" $b={500}>SAVE</T></SaveMain>
        <SaveMore><svg width="14" height="7" viewBox="0 0 14 7"><path d="M0 0h14L7 7z" fill="#c3c5c7" /></svg></SaveMore>
      </SaveGroup>
      <Avatar $bg="#1967d2" $m="0 0 0 15px"><T $s={29} $c="#fff">G</T><AvatarBadge /></Avatar>
      <Tool $w={77}><Dots h={23} r={3} c="#5f6368" /></Tool>
      <Tool $w={12} />
    </HeaderTools>
  </AppHeader>
);

const LeftRail = () => (
  <Rail>
    <RocketBox>
      <svg width="27" height="26" viewBox="0 0 27 26" fill="none" stroke="#5f6368" strokeWidth="2.200">
        <path d="M8 14C11 6 17 2 24 1.500c0 6-3 11-8 14.500zM9 11L2 10.500 8 5l5 1" /><path d="M1.500 24c0-5 1-7 4-8s4 3 2 5-3 2.500-6 3zM12 15l3 3" /><circle cx="17.500" cy="8" r="1.700" fill="#5f6368" stroke="none" />
        <circle cx="20.500" cy="20" r="6" fill="#1e8e3e" stroke="none" /><path d="M17.800 20l2 2 3.700-3.700" stroke="#fff" strokeWidth="1.600" />
      </svg>
    </RocketBox>
    <RailRule $m="28px 0 23.500px" />
    <RailItem $mb={9.500}>{railIcons.data}</RailItem>
    <RailItem $on $mb={10.500}><PhoneIcon w={17} h={27} /></RailItem>
    <RailItem $mb={10.500}><svg width="12" height="23" viewBox="0 0 12 23" fill="currentColor"><path d="M7 0L0 13h4.500L3.500 23 12 9H7.200L8.500 0z" /></svg></RailItem>
    <RailItem $mb={0}><MdOutlineSmartToy size={29} /></RailItem>
    <RailRule $m="29px 0 22px" />
    <RailItem $mb={10}><MdOutlineLightbulb size={29} /></RailItem>
    <RailItem><MdSecurity size={26} /></RailItem>
    <RailItem><Gear s={25} /></RailItem>
    <RailItem>{railIcons.pulse}</RailItem>
    <RailItem $mb={0}><MdOutlineSchool size={29} /></RailItem>
  </Rail>
);

const ViewsPanel = () => (
  <Sidebar>
    <SideHead>
      <T $f={GSANS} $s={22} $b={500} $ls={0.3} $c="#000">Views</T>
      <InfoSlot><MdInfoOutline size={26} /></InfoSlot>
      <Grow />
      <SearchSlot><svg width="19" height="19" viewBox="0 0 19 19" fill="none" stroke="#111" strokeWidth="2.300"><circle cx="7" cy="7" r="5.700" /><path d="M11.500 11.500l6.500 6.500" /></svg></SearchSlot>
      <Tool $w={58} $c="#000"><Gear s={22} /></Tool>
      <Dots h={23} r={2.800} />
    </SideHead>
    <SideSection><T $s={19.600} $ls={0.080} $c="#1a73e8">PRIMARY NAVIGATION</T><Grow /><Tool $w={20} $c="#1a73e8"><Plus /></Tool></SideSection>
    <SideRow $on><WalkIcon><FaWalking size={21} /></WalkIcon><T $s={19.600} $ls={0.1} $c="#1a73e8">CLUBS</T></SideRow>
    <SideRow><RowIcon><FaCalendar size={20} /></RowIcon><T $s={19.600} $ls={0.1}>SCHEDULE</T></SideRow>
    <SideSection $h={70} $pt={17}>
      <T $s={19.600} $ls={0.060} $c="#5f6368">MENU NAVIGATION</T><Grow />
      <Line w={22} h={17} vb="0 0 22 17" sw={2.200}><path d="M12 1.500H7a6 6 0 0 0 0 12h2M6.500 10l3 3.500-3 3.500M13 1.500h9M13 8h9M13 14.500h9" /></Line>
      <Tool $w={20}><Plus /></Tool>
    </SideSection>
    <SideRow><RowIcon><FaCalendar size={20} /></RowIcon><T $s={19.600} $ls={0.1}>CALENDER</T></SideRow>
    <SideRow><RowIcon><FaListUl size={21} /></RowIcon><T $s={19.600} $ls={0.2}>REGISTRATION</T></SideRow>
    <SideSection $h={70} $pt={18}><T $s={19.600} $ls={0.060} $c="#5f6368">REFERENCE VIEWS</T><Grow /><Tool $w={20}><Plus /></Tool></SideSection>
    <SystemArea>
      <SystemHead><T $f={GSANS} $s={14.500} $b={700} $ls={0.15} $lh={26} $c="#5f6368">SYSTEM GENERATED</T><Chevron w={13} h={9} sw={2.300} /></SystemHead>
      <SystemBody>
        <SystemList>
          <SheetName><svg width="11" height="6" viewBox="0 0 11 6"><path d="M0 0h11L5.500 6z" fill="#5f6368" /></svg><T $f={GSANS} $s={19.700} $ls={-0.15} $c="#5f6368">Sheet1 (2)</T></SheetName>
          <SideRow $h={44}><RowIcon><FaIndent size={19} /></RowIcon><T $s={19.600} $ls={0.2}>Sheet1_Detail</T></SideRow>
          <SideRow $h={54}><RowIcon><FaEdit size={23} /></RowIcon><T $s={19.600} $ls={0.25} $lh={16}>Sheet1_Form</T></SideRow>
        </SystemList>
        <ScrollTrack $bg="#e9ecf5"><Thumb $h={92} /></ScrollTrack>
      </SystemBody>
    </SystemArea>
  </Sidebar>
);

const Hint = ({ children }) => <T $s={16.500} $ls={0.6} $lh={25.300} $c="#4a4d51">{children}</T>;
const tiles = ["calendar", "deck", "table", "gallery", "detail", "map", "chart", "dashboard", "form", "onboarding", "card"];
const positions = [["first", 59], ["next", 64], ["middle", 86], ["later", 65], ["last", 57], ["menu", 75], ["ref", 50]];
const options = [
  ["Sort by", "Sort the rows by one or more", "columns."],
  ["Group by", "Group rows by the values in one or", "more of their columns."],
];

const Editor = () => (
  <Center>
    <CenterHead>
      <T $f={GSANS} $s={22.500} $b={500} $ls={0.1} $c="#111">CLUBS</T>
      <Grow />
      <PillButton><T $f={GSANS} $s={20} $b={500} $ls={0.8} $c="#1a73e8">Show in preview</T></PillButton>
      <Tool $w={24}><Dots h={23} r={3} c="#5f6368" /></Tool>
    </CenterHead>
    <CenterBody>
      <Form>
        <Field $h={292}>
          <FieldText $w={310.500} $pt={2}><Hint>What kind of view this is.</Hint></FieldText>
          <Tiles>
            {tiles.map((t) => (
              <Tile key={t} $on={t === "deck"}><IconSlot>{tileIcons[t]}</IconSlot><T $f={GSANS} $s={16} $c="currentColor">{t}</T></Tile>
            ))}
          </Tiles>
        </Field>
        <Field $h={123}>
          <FieldText $w={307.500} $pt={4}>
            <T $s={19} $b={500} $ls={0.6} $lh={28}>Position</T>
            <Hint>Where the button to access this</Hint><Hint>view is located.</Hint>
          </FieldText>
          <Segments>
            {positions.map(([name, w]) => (
              <Segment key={name} $w={w} $on={name === "middle"}><T $f={GSANS} $s={18} $b={500} $ls={0.1} $c={name === "middle" ? "#1967d2" : "#5f6368"}>{name}</T></Segment>
            ))}
          </Segments>
        </Field>
        <SectionHead><T $f={GSANS} $s={23} $ls={0.2} $c="#3c4043">View Options</T><Chevron w={15} h={10} sw={2} d="M1 6.500l5-5 5 5" /></SectionHead>
        {options.map(([title, a, b]) => (
          <Field key={title} $h={112} $pl={23}>
            <FieldText $w={308} $pt={14}><T $s={19} $b={500} $ls={0.550} $lh={27}>{title}</T><Hint>{a}</Hint><Hint>{b}</Hint></FieldText>
            <AddButton><T $f={GSANS} $s={20} $b={500} $ls={0.6} $c="#1a73e8">Add</T></AddButton>
          </Field>
        ))}
      </Form>
      <ScrollTrack $bg="#f7f7f7" $t={102}><Thumb $h={179} /></ScrollTrack>
    </CenterBody>
  </Center>
);

const menuTop = [["CALENDER", <FaCalendar size={25} />, -0.15], ["REGISTRATION", <FaListUl size={26} />, -0.25]];
const menuMid = [
  ["About", <Line w={25} vb="0 0 25 25" sw={2.300}><circle cx="12.500" cy="12.500" r="11.200" /><path d="M10 11h3v7M9.500 18h6.500" /><path d="M11 7h3" strokeWidth="3" /></Line>],
  ["Share", <Line w={25} vb="0 0 25 25" sw={2.500}><circle cx="6.300" cy="12.500" r="3.800" /><circle cx="18.500" cy="5" r="3.600" /><circle cx="18.500" cy="20" r="3.600" /><path d="M9.500 10.500l6-3.700M9.500 14.500l6 3.700" /></Line>],
];

const PreviewPane = () => (
  <Preview>
    <PreviewBar>
      <Device $on><PhoneIcon w={17} h={27} /></Device>
      <Device><Line w={27} h={20} vb="0 0 27 20" sw={2.300} join="round"><path d="M1.200 1.200h24.600v17.600H1.200zM4.800 1v18M22.200 1v18" /></Line></Device>
      <Device $w={55}><Line w={27} h={21} vb="0 0 27 21" sw={2.300} join="round"><path d="M3 1.200h21v14.600H3zM0 19.500h27" /></Line></Device>
      <Grow />
      <Toggle><Knob /></Toggle>
      <EditGroup><T $s={23} $lh={26} $c="#3c4043">Edit</T><MdInfoOutline size={25} /></EditGroup>
      <OpenSlot><MdOpenInNew size={29} /></OpenSlot>
    </PreviewBar>
    <PhoneShadow>
      <Phone>
        <Drawer>
          <DrawerHead>
            <svg width="54" height="50" viewBox="0 0 54 50" fill="none" strokeWidth="1.800">
              <path d="M0 25L6 17A22 22 0 0 1 48 17L54 25 48 33A22 22 0 0 1 6 33z" fill="#fff" /><circle cx="27" cy="25" r="25" fill="#fff" />
              <path d="M6 19a22 22 0 0 1 42.500 7M48 31A22 22 0 0 1 5.500 24M46 24l2.800 3.500 3.200-3.500M2.500 26l3-3.500L8.500 26" stroke="#45529c" />
              <circle cx="16" cy="22" r="3.600" stroke="#62dcc9" /><path d="M10 33q0-6 6-6.500M44 33q0-6-6-6.500" stroke="#62dcc9" /><circle cx="38" cy="22" r="3.600" stroke="#62dcc9" />
              <circle cx="27" cy="19.500" r="4.500" stroke="#45529c" /><path d="M19 35q0-8.500 8-9 8 .5 8 9" stroke="#45529c" />
            </svg>
            <T $f={NOTO} $s={28} $ls={0.25} $lh={52} $c="#fff">CET CLubMaster</T>
          </DrawerHead>
          {menuTop.map(([n, i, ls]) => <DrawerRow key={n}><DrawerIcon>{i}</DrawerIcon><T $f={NOTO} $s={20} $ls={ls} $c="#dadce0">{n}</T></DrawerRow>)}
          <DrawerRule />
          {menuMid.map(([n, i]) => <DrawerRow key={n}><DrawerIcon>{i}</DrawerIcon><T $f={NOTO} $s={20} $c="#dadce0">{n}</T></DrawerRow>)}
          <DrawerRule />
          <DrawerRow><DrawerIcon><svg width="26" height="23" viewBox="0 0 26 23" fill="#9aa0a6"><rect width="12.300" height="10.800" rx="1" /><rect x="13.700" width="12.300" height="10.800" rx="1" /><rect y="12.200" width="12.300" height="10.800" rx="1" /><rect x="13.700" y="12.200" width="12.300" height="10.800" rx="1" /></svg></DrawerIcon><T $f={NOTO} $s={20} $ls={-0.2} $c="#76787a">App Gallery</T></DrawerRow>
          <DrawerFoot>
            <Avatar $bg="#4891dc"><T $f={NOTO} $s={21} $c="#202124">G</T></Avatar>
            <Account>
              <T $f={NOTO} $s={20.500} $ls={-0.070} $lh={30} $c="#77797c">gowrilakshmi321@gmail.com</T>
              <LogOut><T $f={NOTO} $s={21.500} $ls={0.25} $lh={30} $c="#4a90e2">Log Out</T></LogOut>
            </Account>
          </DrawerFoot>
        </Drawer>
        <AppBehind>
          <BehindHead><Line w={32} h={30} vb="0 0 32 30" sw={3.600}><g stroke="#777"><path d="M25.500 22A12.300 12.300 0 1 1 25 7.500M28 1v12H16" /></g></Line></BehindHead>
          <Maze>
            <MazeArt />
            <Fab><Line w={31} h={31} vb="0 0 31 31" sw={7} cap="round"><path stroke="#7a7d80" d="M15.500 4v23M4 15.500h23" /></Line></Fab>
          </Maze>
        </AppBehind>
      </Phone>
    </PhoneShadow>
  </Preview>
);

const taskIcons = {
  explorer: <svg width="28" height="31" viewBox="0 0 28 31"><path d="M0 1h11l2 4H0z" fill="#d99a12" /><path d="M0 5h28v22H0z" fill="#ffd467" /><path d="M5 17q0-2 2-2h14q2 0 2 2v14h-5v-7h-8v7H5z" fill="#3f97db" /></svg>,
  copilot: (
    <svg width="30" height="30" viewBox="0 0 30 30">
      <defs><linearGradient id="ca" x1="0" y1="0" x2="0" y2="1"><stop offset="0" stopColor="#1b6fe0" /><stop offset=".5" stopColor="#2fc3c9" /><stop offset="1" stopColor="#f2d32f" /></linearGradient><linearGradient id="cb" x1="0" y1="0" x2="0" y2="1"><stop offset="0" stopColor="#b56cf0" /><stop offset=".6" stopColor="#f0567c" /><stop offset="1" stopColor="#f7a14b" /></linearGradient></defs>
      <path d="M8 1h12q3 0 4 5l1 2H16l-6 15H4q-5 0-3.500-6L4 5q1-4 4-4z" fill="url(#ca)" /><path d="M22 29H10q-3 0-4-5l-.5-2H14l6-14h6q5 0 3.500 6L26 25q-1 4-4 4z" fill="url(#cb)" />
    </svg>
  ),
  edge: (
    <svg width="30" height="30" viewBox="0 0 30 30">
      <defs><linearGradient id="ea" x1="0" y1="0" x2="1" y2=".4"><stop offset="0" stopColor="#1d9fe0" /><stop offset=".5" stopColor="#2cc1dd" /><stop offset="1" stopColor="#5fe07a" /></linearGradient></defs>
      <circle cx="15" cy="15" r="15" fill="#1377cf" />
      <path d="M0 14A15 15 0 0 1 30 14c0 5-4 7.500-9 7-3-.3-4-1.500-3-3 1.500-3 0-8-6-8.500S2 11 0 14z" fill="url(#ea)" />
      <path d="M11 14c-3 8 5 14 16 10A15 15 0 0 1 12 29.500C4 27 5 16 11 14z" fill="#0c4f9e" />
    </svg>
  ),
  python: (
    <svg width="28" height="29" viewBox="0 0 28 29"><path d="M0 0h17l4 6v22H0z" fill="#e6e6e4" /><path d="M4 0v28M9 0v28M14 0v28" stroke="#b9b9b6" strokeDasharray="2 2" /><path d="M14 11q5-3 9 0v6q0 2-3 2t-3 3h-4v-7h6v-1h-5z" fill="#3673a5" /><path d="M24 14h3q2 4 0 8h-7v1h4v3q-4 3-8 0v-4q0-2 3-2t5-2z" fill="#ffd43b" /></svg>
  ),
  chrome: <ChromeLogo />,
  brave: <svg width="26" height="30" viewBox="0 0 26 30"><path d="M7 0h12l3 3h2l2 5-1 2-3 14-9 6-9-6L1 10 0 8l2-5h2z" fill="#fb4b1f" /><path d="M6 6l7-1 7 1 2 4-3 5 1 3-4 2 1 2-4 3-4-3 1-2-4-2 1-3-3-5z" fill="#fff" /><path d="M8 10l4 1v6l-2 1 1-3-3-3zM18 10l-4 1v6l2 1-1-3 3-3z" fill="#fb4b1f" /></svg>,
  chrome2: <ChromeLogo person />,
  vscode: <svg width="30" height="30" viewBox="0 0 30 30"><path d="M1 9l2-1.500L24 24v6L1 11zM1 21l2 1.500L24 6V0L1 19z" fill="#1583cf" /><path d="M22 0l8 3v24l-8 3z" fill="#2ba8f2" /></svg>,
};
const tasks = ["explorer", "copilot", "edge", "python", "chrome", "brave", "chrome2", "vscode"];
const running = { explorer: 51, chrome2: 62, vscode: 51 };

const WindowsBar = () => (
  <Taskbar>
    <Start><svg width="20" height="20" viewBox="0 0 20 20" fill="#fff"><path d="M0 2.600L8.500 1.500v8H0zM9.500 1.300L20 0v9.500H9.500zM0 10.500h8.500v8L0 17.400zM9.500 10.500H20V20L9.500 18.700z" /></svg></Start>
    <SearchBox>
      <Line w={21} h={21} vb="0 0 21 21" sw={1.600}><circle cx="13" cy="7.500" r="6.500" /><path d="M8.500 12L.8 20" /></Line>
      <T $f={SEGOE} $s={17.500} $ls={0.070} $c="#2b2b2b">Type here to search</T>
      <Grow />
      <SearchArt>
        <svg width="36" height="34" viewBox="0 0 36 34" fill="none" stroke="#7c7f80" strokeWidth="1.500"><ellipse cx="18" cy="17" rx="16.500" ry="6" /><ellipse cx="18" cy="17" rx="16.500" ry="6" transform="rotate(60 18 17)" /><ellipse cx="18" cy="17" rx="16.500" ry="6" transform="rotate(120 18 17)" /><g fill="#71807b" stroke="none"><circle cx="8.500" cy="3" r="3" /><circle cx="33.500" cy="17" r="2.500" /><circle cx="8" cy="27" r="2.800" /></g></svg>
        <svg width="42" height="46" viewBox="0 0 42 46">
          <defs><linearGradient id="ra" x1="0" y1="0" x2="1" y2="1"><stop offset="0" stopColor="#c9a25a" /><stop offset=".5" stopColor="#eab04c" /><stop offset="1" stopColor="#b9792a" /></linearGradient></defs>
          <path d="M10 8Q13 1 22 1q14 1 15 15 0 8-5 12l-2 5q6 2 10 13H10q1-8 4-11l-1-4-6 1-2-4-4-2 2-7q3-9 7-11z" fill="url(#ra)" /><path d="M5 12q4-4 11-2l-1 18-6 3-3-4-5-2z" fill="#5f7a66" /><circle cx="10" cy="16" r="4" fill="#c9d8da" /><circle cx="10" cy="16" r="1.700" fill="#44565e" /><circle cx="22" cy="22" r="5" fill="#f1b453" stroke="#d98324" strokeWidth="2" /><path d="M14 33q8 4 16-2l1 3q-8 6-18 2z" fill="#8f6320" /><path d="M12 10q12-4 25 5" stroke="#9a7836" strokeWidth="1.500" fill="none" />
        </svg>
      </SearchArt>
    </SearchBox>
    <TaskCell $w={63}><TaskIcon><Line w={21} h={20} vb="0 0 21 20" sw={1.500}><path d="M1 0v3.500h12V0M1 20v-3.500h12V20M1 6h12v8H1zM18.500 0v4.500M18.500 11v9" /><path d="M17 7.700h3.500" strokeWidth="3" /></Line></TaskIcon></TaskCell>
    {tasks.map((n) => (
      <TaskCell key={n} $on={n === "chrome2"}>
        <TaskIcon>{taskIcons[n]}</TaskIcon>
        {running[n] && <Underline $w={running[n]} $split={n === "explorer"} />}
      </TaskCell>
    ))}
    <Grow />
    <Tray>
      <Weather>
        <svg width="29" height="29" viewBox="0 0 29 29"><path d="M20 2a14 14 0 1 1-17 20q10 3 15-4t2-16z" fill="#f6a52c" /><path d="M4 12q-4 0-4-4t4-4q1-4 5.500-4t5 4q4 .5 4 4t-4 4z" fill="#9fbdf3" /></svg>
        <T $f={SEGOE} $s={17} $ls={0.19} $c="#fff">29°C  Mostly clear</T>
      </Weather>
      <Slot $w={29}><Line w={16} h={9} vb="0 0 16 9" sw={1.600}><path d="M.5 8.500L8 1l7.500 7.500" /></Line></Slot>
      <Slot $w={32}><Line w={19} h={12} vb="0 0 19 12" sw={1.500}><path d="M.7.7h16.600v10.600H.7zM18.500 3.500v5" /><path d="M4.500 2.500v7" strokeWidth="4" /></Line></Slot>
      <Slot $w={27}><Line w={16} h={16} vb="0 0 16 16" sw={1.300}><path d="M1 15Q1 1 15 1M4.500 15Q5 5 15 5M8 15q.5-6.500 7-6.500" opacity=".8" /><path d="M11.500 15q0-3 3.500-3v3z" fill="#fff" stroke="none" /></Line></Slot>
      <Slot $w={33}><Line w={21} h={18} vb="0 0 21 18" sw={1.300}><path d="M.7 6H4l4-4.500v15L4 12H.7z" /><path d="M11 6q1.500 3 0 6" /><path d="M14 3.500q3.500 5.500 0 11" opacity=".7" /><path d="M17 1q5 8 0 16" opacity=".4" /></Line></Slot>
      <T $f={SEGOE} $s={15} $c="#fff" $ls={-0.5}>ENG</T>
      <Clock><T $f={SEGOE} $s={15} $lh={23} $c="#fff" $ls={-0.5}>22:03</T><T $f={SEGOE} $s={15} $lh={23} $c="#fff" $ls={-0.4}>02-01-2025</T></Clock>
      <Notice>
        <svg width="20" height="20" viewBox="0 0 20 20"><path d="M0 0h20v16H9l-4 4v-4H0z" fill="#fff" /><path d="M4 4.500h12M4 8h12M4 11.500h8" stroke="#283023" strokeWidth="1.300" /></svg>
        <NoticeBadge><T $f={SEGOE} $s={13} $b={700} $lh={16} $c="#fff">9</T></NoticeBadge>
      </Notice>
      <PeekLine />
    </Tray>
  </Taskbar>
);

export default function App() {
  return (
    <Screen>
      <Global />
      <Browser />
      <Header />
      <Workspace>
        <LeftRail />
        <ViewsPanel />
        <Editor />
        <Handle><svg width="8" height="14" viewBox="0 0 8 14"><path d="M0 0l8 7-8 7z" fill="#5f6368" /></svg></Handle>
        <PreviewPane />
      </Workspace>
      <WindowsBar />
    </Screen>
  );
}
